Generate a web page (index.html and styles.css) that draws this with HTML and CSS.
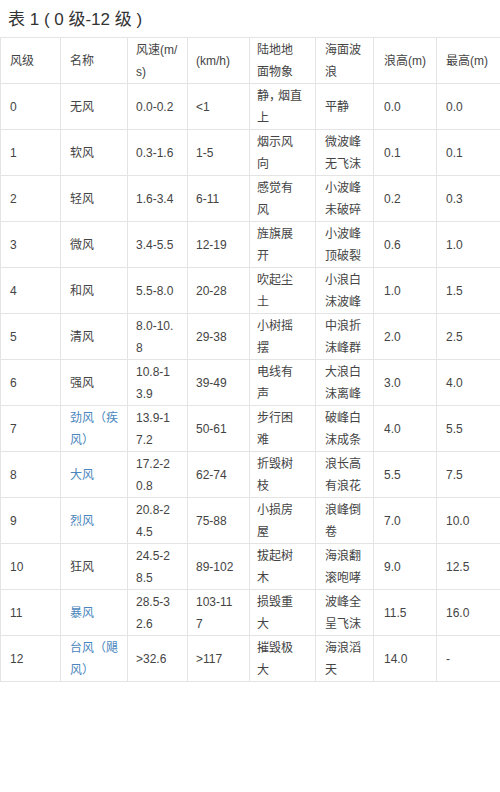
FILE: index.html
```html
<!DOCTYPE html>
<html lang="zh-CN">
<head>
<meta charset="utf-8">
<title>蒲福风级表</title>
<link rel="stylesheet" href="styles.css">
</head>
<body>
<div class="page">
  <h3 class="title">表 1 ( 0 级-12 级 )</h3>
  <table class="wind">
    <colgroup>
      <col class="c0"><col class="c1"><col class="c2"><col class="c3"><col class="c4"><col class="c5"><col class="c6"><col class="c7">
    </colgroup>
    <thead>
      <tr><th>风级</th><th>名称</th><th>风速(m/s)</th><th>(km/h)</th><th>陆地地面物象</th><th>海面波浪</th><th>浪高(m)</th><th>最高(m)</th></tr>
    </thead>
    <tbody>
      <tr><td>0</td><td>无风</td><td>0.0-0.2</td><td>&lt;1</td><td>静<span class="punct">，</span>烟直上</td><td>平静</td><td>0.0</td><td>0.0</td></tr>
      <tr><td>1</td><td>软风</td><td>0.3-1.6</td><td>1-5</td><td>烟示风向</td><td>微波峰无飞沫</td><td>0.1</td><td>0.1</td></tr>
      <tr><td>2</td><td>轻风</td><td>1.6-3.4</td><td>6-11</td><td>感觉有风</td><td>小波峰未破碎</td><td>0.2</td><td>0.3</td></tr>
      <tr><td>3</td><td>微风</td><td>3.4-5.5</td><td>12-19</td><td>旌旗展开</td><td>小波峰顶破裂</td><td>0.6</td><td>1.0</td></tr>
      <tr><td>4</td><td>和风</td><td>5.5-8.0</td><td>20-28</td><td>吹起尘土</td><td>小浪白沫波峰</td><td>1.0</td><td>1.5</td></tr>
      <tr><td>5</td><td>清风</td><td>8.0-10.8</td><td>29-38</td><td>小树摇摆</td><td>中浪折沫峰群</td><td>2.0</td><td>2.5</td></tr>
      <tr><td>6</td><td>强风</td><td>10.8-13.9</td><td>39-49</td><td>电线有声</td><td>大浪白沫离峰</td><td>3.0</td><td>4.0</td></tr>
      <tr><td>7</td><td><a class="link" href="#">劲风（疾风）</a></td><td>13.9-17.2</td><td>50-61</td><td>步行困难</td><td>破峰白沫成条</td><td>4.0</td><td>5.5</td></tr>
      <tr><td>8</td><td><a class="link" href="#">大风</a></td><td>17.2-20.8</td><td>62-74</td><td>折毁树枝</td><td>浪长高有浪花</td><td>5.5</td><td>7.5</td></tr>
      <tr><td>9</td><td><a class="link" href="#">烈风</a></td><td>20.8-24.5</td><td>75-88</td><td>小损房屋</td><td>浪峰倒卷</td><td>7.0</td><td>10.0</td></tr>
      <tr><td>10</td><td>狂风</td><td>24.5-28.5</td><td>89-102</td><td>拔起树木</td><td>海浪翻滚咆哮</td><td>9.0</td><td>12.5</td></tr>
      <tr><td>11</td><td><a class="link" href="#">暴风</a></td><td>28.5-32.6</td><td>103-117</td><td>损毁重大</td><td>波峰全呈飞沫</td><td>11.5</td><td>16.0</td></tr>
      <tr><td>12</td><td><a class="link" href="#">台风（飓风）</a></td><td>&gt;32.6</td><td>&gt;117</td><td>摧毁极大</td><td>海浪滔天</td><td>14.0</td><td>-</td></tr>
    </tbody>
  </table>
</div>
</body>
</html>
```

FILE: styles.css
```css
html, body {
  margin: 0;
  padding: 0;
  background: #ffffff;
}

body {
  font-family: "Liberation Sans", "Noto Sans CJK SC", sans-serif;
  color: #444444;
}

.page {
  width: 500px;
}

.title {
  margin: 0;
  padding: 2px 0 0 8px;
  height: 35px;
  line-height: 36px;
  font-size: 17px;
  font-weight: normal;
  color: #333333;
}

.wind {
  width: 500px;
  table-layout: fixed;
  border-collapse: collapse;
  font-size: 12px;
}

.c0 { width: 60px; }
.c1 { width: 67px; }
.c2 { width: 60px; }
.c3 { width: 62px; }
.c4 { width: 66px; }
.c5 { width: 58px; }
.c6 { width: 63px; }
.c7 { width: 64px; }

.wind td,
.wind th {
  border: 1px solid #e4e4e4;
  padding: 1px 8px 0 8px;
  line-height: 22px;
  height: 44px;
  box-sizing: content-box;
  vertical-align: middle;
  text-align: left;
  font-weight: normal;
  word-break: break-all;
  color: #444444;
}

.wind td:nth-child(1), .wind th:nth-child(1) { padding-left: 9px; }
.wind td:nth-child(2), .wind th:nth-child(2) { padding-left: 9px; }
.wind td:nth-child(3) { padding-right: 13px; }
.wind th:nth-child(3) { padding-right: 9px; }
.wind td:nth-child(4), .wind th:nth-child(4) { padding-right: 14px; }
.wind td:nth-child(5), .wind th:nth-child(5) { padding-left: 7px; padding-right: 12px; }
.wind td:nth-child(6), .wind th:nth-child(6) { padding-left: 9px; padding-right: 7px; }
.wind td:nth-child(7), .wind th:nth-child(7) { padding-left: 10px; }
.wind td:nth-child(8), .wind th:nth-child(8) { padding-left: 9px; }

.punct {
  font-feature-settings: "halt";
  letter-spacing: 3px;
}

.link {
  color: #4a86bd;
  text-decoration: none;
}
```
